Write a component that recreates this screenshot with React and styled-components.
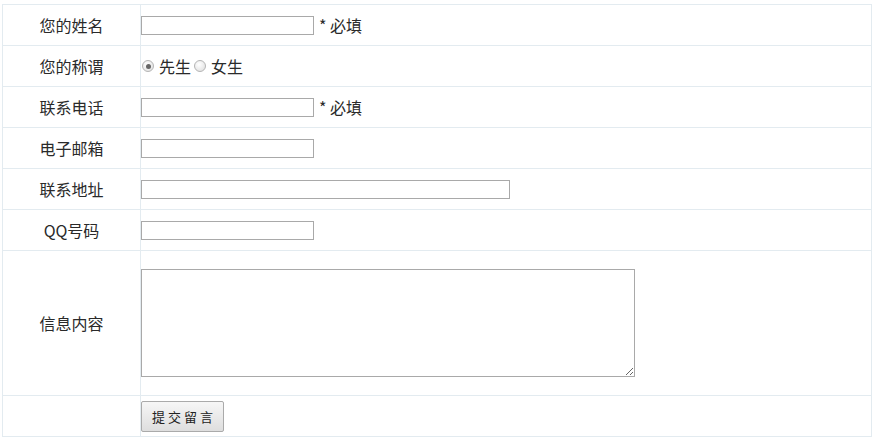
import styled, { createGlobalStyle } from "styled-components"

const Global = createGlobalStyle`
body{
margin:0;
background:#fff;
font-family:"Microsoft YaHei","Noto Sans CJK SC",sans-serif;
font-size:16px;
color:#2a2a2a;
}
`

const Wrap = styled.div`
padding:4px 4px 0 2px;
`

const Table = styled.table`
width:870px;
border-collapse:collapse;
border:1px solid #e3ebf0;
`

const Row = styled.tr`
border-bottom:1px solid #e3ebf0;
`

const Label = styled.td`
width:137px;
height:${props => props.tall ? 144 : 40}px;
padding:0;
text-align:center;
border-right:1px solid #e3ebf0;
`

const Field = styled.td`
padding:0;
vertical-align:middle;
`

const Line = styled.div`
display:flex;
align-items:center;
gap:5px;
`

const Input = styled.input`
box-sizing:border-box;
width:${props => props.w || 173}px;
height:19px;
margin:0;
border:1px solid #a9a9a9;
padding:1px 2px;
font:inherit;
font-size:13px;
`

const Req = styled.span`
line-height:19px;
`

const Radio = styled.input.attrs({ type: "radio" })`
appearance:none;
width:12px;
height:12px;
margin:0 5px 0 1px;
border:1px solid #b5b5b5;
border-radius:50%;
background:radial-gradient(circle at 40% 35%, #fff, #dcdcdc);
position:relative;
&:checked::after{
content:"";
position:absolute;
left:2.5px;
top:2.5px;
width:5px;
height:5px;
border-radius:50%;
background:#666;
}
`

const RadioText = styled.label`
display:inline-flex;
align-items:center;
`

const Radios = styled(Line)`
gap:2px;
`

const Area = styled.textarea`
box-sizing:border-box;
display:block;
width:494px;
height:108px;
margin:0;
border:1px solid #a9a9a9;
font:inherit;
font-size:13px;
`

const Button = styled.button`
box-sizing:border-box;
display:block;
width:83px;
height:31px;
margin:0;
border:1px solid #aaa;
border-radius:2px;
background:linear-gradient(#f6f6f6, #dedede);
font-family:"Microsoft YaHei","Noto Sans CJK SC",sans-serif;
font-size:13px;
letter-spacing:3px;
padding:0 0 0 3px;
color:#222;
`

export default function App(){
    return(
        <Wrap>
            <Global />
            <Table>
                <tbody>
                    <Row>
                        <Label>您的姓名</Label>
                        <Field><Line><Input /><Req>* 必填</Req></Line></Field>
                    </Row>
                    <Row>
                        <Label>您的称谓</Label>
                        <Field>
                            <Radios>
                                <RadioText><Radio name="sex" defaultChecked />先生</RadioText>
                                <RadioText><Radio name="sex" />女生</RadioText>
                            </Radios>
                        </Field>
                    </Row>
                    <Row>
                        <Label>联系电话</Label>
                        <Field><Line><Input /><Req>* 必填</Req></Line></Field>
                    </Row>
                    <Row>
                        <Label>电子邮箱</Label>
                        <Field><Line><Input /></Line></Field>
                    </Row>
                    <Row>
                        <Label>联系地址</Label>
                        <Field><Line><Input w={369} /></Line></Field>
                    </Row>
                    <Row>
                        <Label>QQ号码</Label>
                        <Field><Line><Input /></Line></Field>
                    </Row>
                    <Row>
                        <Label tall>信息内容</Label>
                        <Field><Area /></Field>
                    </Row>
                    <Row>
                        <Label></Label>
                        <Field><Button>提交留言</Button></Field>
                    </Row>
                </tbody>
            </Table>
        </Wrap>
    )
}
